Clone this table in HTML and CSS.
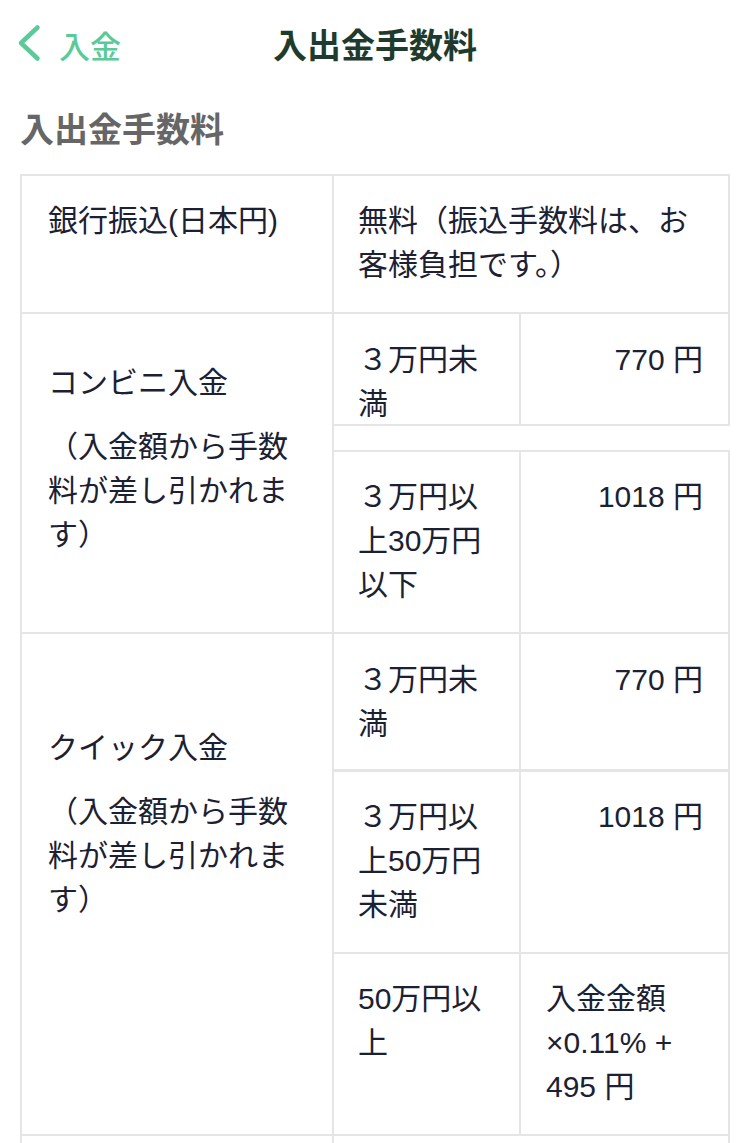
FILE: index.html
```html
<!DOCTYPE html>
<html lang="ja">
<head>
<meta charset="utf-8">
<title>入出金手数料</title>
<link rel="stylesheet" href="styles.css">
</head>
<body>
<header class="nav">
  <a class="nav-back" href="#">
    <svg class="nav-chevron" width="24" height="38" viewBox="0 0 24 38"><polyline points="20.5,3.5 4,19 20.5,34.5" fill="none" stroke="#5bca99" stroke-width="4.5" stroke-linecap="round" stroke-linejoin="round"/></svg>
    <span>入金</span>
  </a>
  <h1 class="nav-title">入出金手数料</h1>
  <span></span>
</header>

<main class="content">
  <h2 class="section-title">入出金手数料</h2>

  <div class="fee-table">
    <div class="row">
      <div class="label label--top">銀行振込(日本円)</div>
      <div class="value">無料（振込手数料は、お客様負担です。）</div>
    </div>

    <div class="row">
      <div class="label label--conv">
        <p>コンビニ入金</p>
        <p>（入金額から手数料が差し引かれます）</p>
      </div>
      <div class="subs">
        <div class="sub sub--a">
          <div class="range">３万円未満</div>
          <div class="fee fee--right">770 円</div>
        </div>
        <div class="sub-gap"></div>
        <div class="sub sub--b">
          <div class="range">３万円以上30万円以下</div>
          <div class="fee fee--right">1018 円</div>
        </div>
      </div>
    </div>

    <div class="row">
      <div class="label label--quick">
        <p>クイック入金</p>
        <p>（入金額から手数料が差し引かれます）</p>
      </div>
      <div class="subs">
        <div class="sub sub--q1">
          <div class="range">３万円未満</div>
          <div class="fee fee--right">770 円</div>
        </div>
        <div class="sub sub--q2">
          <div class="range">３万円以上50万円未満</div>
          <div class="fee fee--right">1018 円</div>
        </div>
        <div class="sub sub--q3">
          <div class="range">50万円以上</div>
          <div class="fee">入金金額×0.11% + 495 円</div>
        </div>
      </div>
    </div>

    <div class="row row--next">
      <div class="label"></div>
      <div class="value"></div>
    </div>
  </div>
</main>
</body>
</html>
```

FILE: styles.css
```css
* {
  box-sizing: border-box;
}

html, body {
  margin: 0;
  padding: 0;
  background: #ffffff;
}

body {
  font-family: "Liberation Sans", "Noto Sans CJK JP", sans-serif;
  color: #1b2133;
  width: 750px;
  overflow: hidden;
}

.nav {
  display: grid;
  grid-template-columns: 1fr auto 1fr;
  align-items: center;
  height: 88px;
  padding: 0 17px;
}

.nav-back {
  display: flex;
  align-items: center;
  gap: 18px;
  color: #5bca99;
  text-decoration: none;
  font-size: 31px;
  font-weight: 500;
  font-family: "Noto Sans CJK JP", sans-serif;
}

.nav-chevron {
  display: block;
  margin-top: -2px;
}

.nav-title {
  margin: 0;
  font-family: "Noto Sans CJK JP", sans-serif;
  font-size: 34px;
  font-weight: 700;
  color: #1e3b2d;
  line-height: 48px;
}

.content {
  padding: 0 20px;
}

.section-title {
  margin: 16px 0 22px;
  font-family: "Noto Sans CJK JP", sans-serif;
  font-size: 34px;
  font-weight: 700;
  line-height: 48px;
  color: #666666;
}

.fee-table {
  width: 710px;
  border-left: 2px solid #e5e5e5;
  border-top: 2px solid #e5e5e5;
  font-size: 30px;
  line-height: 44px;
}

.fee-table p {
  margin: 0 0 20px;
}

.row {
  display: flex;
  border-bottom: 2px solid #e5e5e5;
}

.label {
  width: 312px;
  flex: none;
  border-right: 2px solid #e5e5e5;
  padding: 0 26px 0 26px;
}

.label--top {
  padding-top: 23px;
}

.label--conv {
  padding-top: 47px;
}

.label--quick {
  padding-top: 92px;
}

.value {
  flex: 1;
  border-right: 2px solid #e5e5e5;
  padding: 23px 24px 25px 24px;
}

.subs {
  flex: 1;
  display: flex;
  flex-direction: column;
}

.sub {
  display: flex;
}

.range {
  width: 187px;
  flex: none;
  border-right: 2px solid #e5e5e5;
  padding: 23px 20px 25px 24px;
}

.fee {
  flex: 1;
  border-right: 2px solid #e5e5e5;
  padding: 23px 25px 25px 25px;
}

.fee--right {
  text-align: right;
}

.sub--a {
  height: 112px;
  border-bottom: 2px solid #e5e5e5;
}

.sub--a .range,
.sub--a .fee {
  padding-top: 24px;
  padding-bottom: 0;
}

.sub-gap {
  height: 24px;
}

.sub--b {
  border-top: 2px solid #e5e5e5;
}

.sub--q1 {
  border-bottom: 3px solid #e5e5e5;
}

.sub--q1 .range,
.sub--q1 .fee {
  padding-top: 24px;
  padding-bottom: 23px;
}

.sub--q2 {
  border-bottom: 2px solid #e5e5e5;
}

.row--next {
  height: 120px;
  border-bottom: none;
}
```
